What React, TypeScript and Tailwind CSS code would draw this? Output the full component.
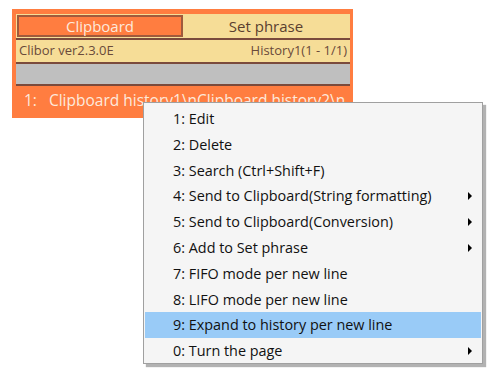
import { ReactNode } from "react";

const items: { label: string; sub?: boolean; active?: boolean }[] = [
  { label: "1: Edit" },
  { label: "2: Delete" },
  { label: "3: Search (Ctrl+Shift+F)" },
  { label: "4: Send to Clipboard(String formatting)", sub: true },
  { label: "5: Send to Clipboard(Conversion)", sub: true },
  { label: "6: Add to Set phrase", sub: true },
  { label: "7: FIFO mode per new line" },
  { label: "8: LIFO mode per new line" },
  { label: "9: Expand to history per new line", active: true },
  { label: "0: Turn the page", sub: true },
];

const Arrow = () => (
  <svg width="5" height="8" viewBox="0 0 5 8" className="mr-[8px]">
    <path d="M0 0 L4 4 L0 8 Z" fill="#000" />
  </svg>
);

const MenuItem = ({ children, sub, active }: { children: ReactNode; sub?: boolean; active?: boolean }) => (
  <div
    className={`flex items-center justify-between h-[25.8px] pl-[28px] ${
      active ? "bg-[#99cbf7]" : ""
    }`}
  >
    <span>{children}</span>
    {sub && <Arrow />}
  </div>
);

export default function App() {
  return (
    <div className="relative w-[500px] h-[379px] bg-white overflow-hidden font-['Open_Sans','Noto_Sans',sans-serif]">
      {/* Clibor window */}
      <div className="ml-[12px] mt-[9px] w-[341px] h-[109px] bg-[#ff7d40] pt-[5px] pl-[4px] pr-[3px]">
        <div className="flex h-[24px] bg-[#f6dd97] p-[1px]">
          <div className="w-[166px] h-full bg-[#ff7d40] border-2 border-[#a05a3c] flex items-center justify-center text-[15px] text-[#fde9dc]">
            Clipboard
          </div>
          <div className="flex-1 flex items-center justify-center text-[15px] text-[#5a3f30]">
            Set phrase
          </div>
        </div>
        <div className="h-[2px] bg-[#7a4a3c]" />
        <div className="h-[22px] bg-[#f6dd97] flex items-center justify-between px-[3px] text-[13px] text-[#6a4a3a]">
          <span>Clibor ver2.3.0E</span>
          <span>History1(1 - 1/1)</span>
        </div>
        <div className="h-[2px] bg-[#7a4a3c]" />
        <div className="h-[20px] bg-[#bfbfbf]" />
        <div className="h-[2px] bg-[#7a4a3c]" />
        <div className="h-[30px] flex items-center pl-[8px] text-[15.5px] text-[#fde9dc] whitespace-nowrap overflow-hidden">
          <span className="mr-[12px]">1:</span>
          <span>Clipboard history1\nClipboard history2\n</span>
        </div>
      </div>

      {/* Context menu */}
      <div className="absolute left-[143px] top-[102px] w-[340px] h-[262px] bg-[#f5f5f5] border border-[#a0a0a0] shadow-[3px_3px_1px_rgba(0,0,0,0.3)] pt-[3px] px-[1px] text-[14.4px] text-[#111]">
        {items.map((it) => (
          <MenuItem key={it.label} sub={it.sub} active={it.active}>
            {it.label}
          </MenuItem>
        ))}
      </div>
    </div>
  );
}
